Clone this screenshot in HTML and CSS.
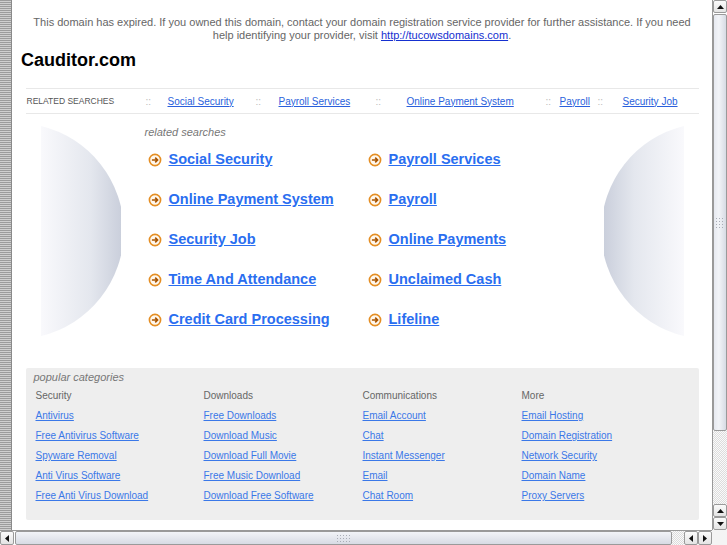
FILE: index.html
```html
<!DOCTYPE html>
<html lang="en">
<head>
  <meta charset="UTF-8" />
  <title>Cauditor.com</title>
  <link rel="stylesheet" href="styles.css">
</head>
<body>
  <div class="screen">
    <div class="stripe"></div>

    <div class="page">
      <p class="notice">This domain has expired. If you owned this domain, contact your domain registration service provider for further assistance. If you need help identifying your provider, visit <a href="#">http://tucowsdomains.com</a>.</p>
      <h1 class="title">Cauditor.com</h1>

      <div class="wrap">
        <div class="related-bar">
          <span class="rb-label">RELATED SEARCHES</span>
          <span class="sep">::</span><a href="#">Social Security</a>
          <span class="sep">::</span><a href="#">Payroll Services</a>
          <span class="sep">::</span><a href="#">Online Payment System</a>
          <span class="sep">::</span><a href="#">Payroll</a>
          <span class="sep">::</span><a href="#">Security Job</a>
        </div>

        <div class="middle">
          <svg class="deco" width="80" height="210" viewBox="0 0 80 210">
            <defs>
              <linearGradient id="fadeL" x1="0" y1="0" x2="1" y2="0">
                <stop offset="0" stop-color="#f9f9fc"/>
                <stop offset="0.6" stop-color="#e4e7ee"/>
                <stop offset="1" stop-color="#c8cdda"/>
              </linearGradient>
            </defs>
            <path d="M0 0 A108 108 0 0 1 0 210 Z" fill="url(#fadeL)"/>
          </svg>

          <div class="searches">
            <div class="searches-head">related searches</div>
            <ul class="search-list">
              <li><svg class="go" width="14" height="14" viewBox="0 0 14 14"><circle cx="7" cy="7" r="5.6" fill="#fff8ee" stroke="#e58e22" stroke-width="1.6"/><path d="M3.9 7H9.6M7.2 4.6L9.6 7L7.2 9.4" fill="none" stroke="#a85400" stroke-width="1.6"/></svg><a href="#">Social Security</a></li>
              <li><svg class="go" width="14" height="14" viewBox="0 0 14 14"><circle cx="7" cy="7" r="5.6" fill="#fff8ee" stroke="#e58e22" stroke-width="1.6"/><path d="M3.9 7H9.6M7.2 4.6L9.6 7L7.2 9.4" fill="none" stroke="#a85400" stroke-width="1.6"/></svg><a href="#">Payroll Services</a></li>
              <li><svg class="go" width="14" height="14" viewBox="0 0 14 14"><circle cx="7" cy="7" r="5.6" fill="#fff8ee" stroke="#e58e22" stroke-width="1.6"/><path d="M3.9 7H9.6M7.2 4.6L9.6 7L7.2 9.4" fill="none" stroke="#a85400" stroke-width="1.6"/></svg><a href="#">Online Payment System</a></li>
              <li><svg class="go" width="14" height="14" viewBox="0 0 14 14"><circle cx="7" cy="7" r="5.6" fill="#fff8ee" stroke="#e58e22" stroke-width="1.6"/><path d="M3.9 7H9.6M7.2 4.6L9.6 7L7.2 9.4" fill="none" stroke="#a85400" stroke-width="1.6"/></svg><a href="#">Payroll</a></li>
              <li><svg class="go" width="14" height="14" viewBox="0 0 14 14"><circle cx="7" cy="7" r="5.6" fill="#fff8ee" stroke="#e58e22" stroke-width="1.6"/><path d="M3.9 7H9.6M7.2 4.6L9.6 7L7.2 9.4" fill="none" stroke="#a85400" stroke-width="1.6"/></svg><a href="#">Security Job</a></li>
              <li><svg class="go" width="14" height="14" viewBox="0 0 14 14"><circle cx="7" cy="7" r="5.6" fill="#fff8ee" stroke="#e58e22" stroke-width="1.6"/><path d="M3.9 7H9.6M7.2 4.6L9.6 7L7.2 9.4" fill="none" stroke="#a85400" stroke-width="1.6"/></svg><a href="#">Online Payments</a></li>
              <li><svg class="go" width="14" height="14" viewBox="0 0 14 14"><circle cx="7" cy="7" r="5.6" fill="#fff8ee" stroke="#e58e22" stroke-width="1.6"/><path d="M3.9 7H9.6M7.2 4.6L9.6 7L7.2 9.4" fill="none" stroke="#a85400" stroke-width="1.6"/></svg><a href="#">Time And Attendance</a></li>
              <li><svg class="go" width="14" height="14" viewBox="0 0 14 14"><circle cx="7" cy="7" r="5.6" fill="#fff8ee" stroke="#e58e22" stroke-width="1.6"/><path d="M3.9 7H9.6M7.2 4.6L9.6 7L7.2 9.4" fill="none" stroke="#a85400" stroke-width="1.6"/></svg><a href="#">Unclaimed Cash</a></li>
              <li><svg class="go" width="14" height="14" viewBox="0 0 14 14"><circle cx="7" cy="7" r="5.6" fill="#fff8ee" stroke="#e58e22" stroke-width="1.6"/><path d="M3.9 7H9.6M7.2 4.6L9.6 7L7.2 9.4" fill="none" stroke="#a85400" stroke-width="1.6"/></svg><a href="#">Credit Card Processing</a></li>
              <li><svg class="go" width="14" height="14" viewBox="0 0 14 14"><circle cx="7" cy="7" r="5.6" fill="#fff8ee" stroke="#e58e22" stroke-width="1.6"/><path d="M3.9 7H9.6M7.2 4.6L9.6 7L7.2 9.4" fill="none" stroke="#a85400" stroke-width="1.6"/></svg><a href="#">Lifeline</a></li>
            </ul>
          </div>

          <svg class="deco deco-right" width="80" height="210" viewBox="0 0 80 210">
            <defs>
              <linearGradient id="fadeR" x1="0" y1="0" x2="1" y2="0">
                <stop offset="0" stop-color="#c8cdda"/>
                <stop offset="0.4" stop-color="#e4e7ee"/>
                <stop offset="1" stop-color="#f9f9fc"/>
              </linearGradient>
            </defs>
            <path d="M80 0 A108 108 0 0 0 80 210 Z" fill="url(#fadeR)"/>
          </svg>
        </div>

        <div class="popular">
          <div class="popular-head">popular categories</div>
          <div class="cats">
            <div class="cat">
              <span class="cat-name">Security</span>
              <a href="#">Antivirus</a>
              <a href="#">Free Antivirus Software</a>
              <a href="#">Spyware Removal</a>
              <a href="#">Anti Virus Software</a>
              <a href="#">Free Anti Virus Download</a>
            </div>
            <div class="cat">
              <span class="cat-name">Downloads</span>
              <a href="#">Free Downloads</a>
              <a href="#">Download Music</a>
              <a href="#">Download Full Movie</a>
              <a href="#">Free Music Download</a>
              <a href="#">Download Free Software</a>
            </div>
            <div class="cat">
              <span class="cat-name">Communications</span>
              <a href="#">Email Account</a>
              <a href="#">Chat</a>
              <a href="#">Instant Messenger</a>
              <a href="#">Email</a>
              <a href="#">Chat Room</a>
            </div>
            <div class="cat">
              <span class="cat-name">More</span>
              <a href="#">Email Hosting</a>
              <a href="#">Domain Registration</a>
              <a href="#">Network Security</a>
              <a href="#">Domain Name</a>
              <a href="#">Proxy Servers</a>
            </div>
          </div>
        </div>
      </div>
    </div>

    <div class="vscroll">
      <div class="sb-btn"><svg width="7" height="4" viewBox="0 0 7 4"><path d="M3.5 0L7 4H0Z"/></svg></div>
      <div class="sb-thumb v-thumb"><span class="grip"></span></div>
      <div class="sb-track"></div>
      <div class="sb-btn"><svg width="7" height="4" viewBox="0 0 7 4"><path d="M3.5 0L7 4H0Z"/></svg></div>
      <div class="sb-btn"><svg width="7" height="4" viewBox="0 0 7 4"><path d="M0 0H7L3.5 4Z"/></svg></div>
    </div>

    <div class="hscroll">
      <div class="sb-btn"><svg width="4" height="7" viewBox="0 0 4 7"><path d="M0 3.5L4 0V7Z"/></svg></div>
      <div class="sb-thumb h-thumb"><span class="grip"></span></div>
      <div class="sb-track"></div>
      <div class="sb-btn"><svg width="4" height="7" viewBox="0 0 4 7"><path d="M0 3.5L4 0V7Z"/></svg></div>
      <div class="sb-btn"><svg width="4" height="7" viewBox="0 0 4 7"><path d="M4 3.5L0 0V7Z"/></svg></div>
    </div>

    <div class="corner"></div>
  </div>
</body>
</html>
```

FILE: styles.css
```css
html, body {
  margin: 0;
  padding: 0;
}
body {
  font-family: "Liberation Sans", Arial, sans-serif;
  background: #fff;
  overflow: hidden;
}
.screen {
  display: grid;
  grid-template-columns: 12px 700px 15px;
  grid-template-rows: 530px 15px;
  width: 727px;
  height: 545px;
}
.stripe {
  background: repeating-linear-gradient(to bottom, #9c9c9c 0 1px, #cfcfcf 1px 2px);
  border-right: 1px solid #8a8a8a;
}
.page {
  background: #fff;
  overflow: hidden;
}

/* top notice */
.notice {
  margin: 16px 20px 0;
  font-size: 11px;
  line-height: 13px;
  color: #666;
  text-align: center;
}
.notice a {
  color: #1530d0;
}
.title {
  margin: 7px 0 0 9px;
  font-size: 18px;
  line-height: 22px;
  font-weight: bold;
  color: #000;
}

.wrap {
  width: 673px;
  margin: 0 auto;
}

/* related searches bar */
.related-bar {
  display: grid;
  grid-template-columns: 119px 22px 88px 23px 97px 31px 139px 14px 38px 25px auto;
  align-items: center;
  height: 24px;
  margin-top: 17px;
  padding-left: 1px;
  border-top: 1px solid #e8e8e8;
  border-bottom: 1px solid #e8e8e8;
  font-size: 10px;
}
.rb-label {
  font-size: 8.5px;
  color: #555;
}
.sep {
  color: #bbb;
}
.related-bar a {
  color: #2a5fdc;
}

/* middle block */
.middle {
  display: flex;
  align-items: flex-start;
  margin-top: 12px;
}
.deco {
  flex: none;
  margin-left: 15px;
}
.deco-right {
  margin-left: auto;
  margin-right: 15px;
}
.searches {
  margin-left: 24px;
}
.searches-head {
  font-size: 11px;
  line-height: 13px;
  font-style: italic;
  color: #777;
}
.search-list {
  display: grid;
  grid-template-columns: 220px 220px;
  grid-auto-rows: 40px;
  margin: 0;
  padding: 0;
  list-style: none;
}
.search-list li {
  display: flex;
  align-items: center;
  gap: 7px;
  padding-left: 3px;
}
.go {
  flex: none;
  margin-top: 2px;
}
.search-list a {
  font-size: 14.5px;
  font-weight: bold;
  color: #2a6ef0;
}

/* popular categories */
.popular {
  margin-top: 29px;
  padding: 3px 8px 14px;
  background: #eeeeee;
  border-radius: 2px;
}
.popular-head {
  font-size: 11px;
  line-height: 13px;
  font-style: italic;
  color: #777;
}
.cats {
  display: grid;
  grid-template-columns: 168px 159px 159px 1fr;
  margin-top: 2px;
}
.cat {
  padding-left: 2px;
}
.cat-name, .cat a {
  display: block;
  font-size: 10px;
  line-height: 20px;
}
.cat-name {
  color: #666;
}
.cat a {
  color: #3a78e8;
  width: max-content;
}

/* scrollbars */
.vscroll {
  display: flex;
  flex-direction: column;
  background: #fff;
  border-left: 1px solid #999;
}
.hscroll {
  grid-column: 1 / 3;
  display: flex;
  background: #fff;
  border-top: 1px solid #999;
}
.corner {
  background: #f4f4f4;
}
.sb-btn {
  display: flex;
  align-items: center;
  justify-content: center;
  flex: none;
  background: linear-gradient(#fbfbfb, #e4e4e4);
  border: 1px solid #9a9a9a;
  border-radius: 2px;
}
.sb-btn svg path {
  fill: #111;
}
.vscroll .sb-btn {
  height: 11px;
}
.hscroll .sb-btn {
  width: 12px;
}
.sb-thumb {
  display: flex;
  align-items: center;
  justify-content: center;
  flex: none;
  border: 1px solid #9a9a9a;
  border-radius: 2px;
}
.v-thumb {
  height: 415px;
  margin-top: 1px;
  background: linear-gradient(to right, #e6e9f0, #f2f4f8 40%, #d7dbe4);
}
.h-thumb {
  width: 655px;
  margin-left: 1px;
  background: linear-gradient(#f2f4f8, #e2e5ec 60%, #d7dbe4);
}
.grip {
  width: 10px;
  height: 12px;
  background: radial-gradient(circle, #a9adb6 0.7px, transparent 1px) 0 0 / 3px 3px;
}
.h-thumb .grip {
  width: 16px;
  height: 8px;
}
.sb-track {
  flex: 1;
  background: repeating-conic-gradient(#dcdcdc 0 25%, #fafafa 0 50%) 0 0 / 2px 2px;
}
```
